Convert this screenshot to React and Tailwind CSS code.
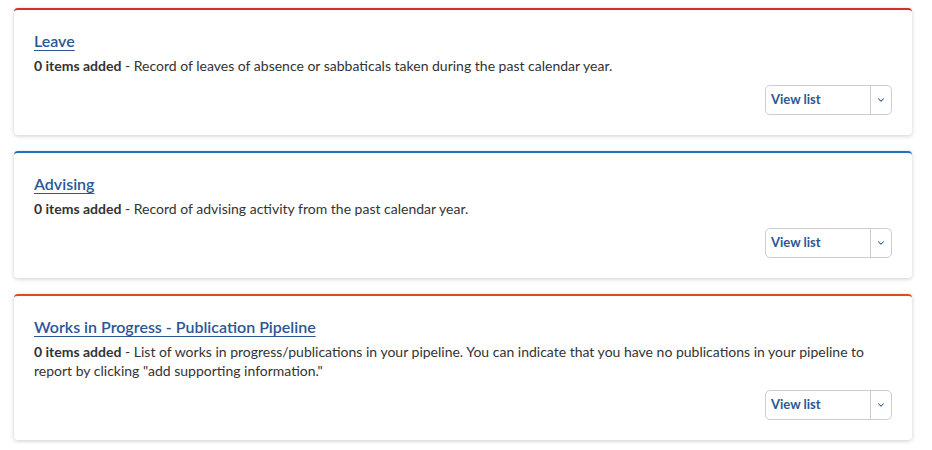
import { ChevronDown } from 'lucide-react'

const SECTIONS = [
  {
    title: 'Leave',
    border: 'border-t-[#d3302b]',
    desc: 'Record of leaves of absence or sabbaticals taken during the past calendar year.',
  },
  {
    title: 'Advising',
    border: 'border-t-[#1f72bd]',
    desc: 'Record of advising activity from the past calendar year.',
  },
  {
    title: 'Works in Progress - Publication Pipeline',
    border: 'border-t-[#df4a1f]',
    desc: 'List of works in progress/publications in your pipeline. You can indicate that you have no publications in your pipeline to report by clicking "add supporting information."',
  },
]

export default function App() {
  return (
    <div className="min-h-[450px] bg-white pt-[8px] px-[14px] font-['Lato',sans-serif] text-[#333]">
      <div className="w-[898px] space-y-[16px]">
        {SECTIONS.map(s => (
          <div
            key={s.title}
            className={`bg-white rounded-[4px] border-t-2 ${s.border} shadow-[0_1px_4px_rgba(0,0,0,0.2)] px-[20px] pt-[19px] pb-[20px]`}
          >
            <a href="#" className="text-[16px] leading-[22px] font-semibold text-[#2b5797] underline underline-offset-[3px]">
              {s.title}
            </a>
            <p className="mt-[3px] text-[14px] leading-[19px]">
              <strong className="font-bold">0 items added</strong> - {s.desc}
            </p>
            <div className="flex justify-end mt-[10px]">
              <div className="flex h-[30px] w-[127px] border border-[#cfcbd0] rounded-[5px] text-[13px] font-bold text-[#2b5797]">
                <button className="flex-1 text-left pl-[5px]">View list</button>
                <span className="w-[21px] border-l border-[#cfcbd0] flex items-center justify-center">
                  <ChevronDown size={10} strokeWidth={2.5} />
                </span>
              </div>
            </div>
          </div>
        ))}
      </div>
    </div>
  )
}
